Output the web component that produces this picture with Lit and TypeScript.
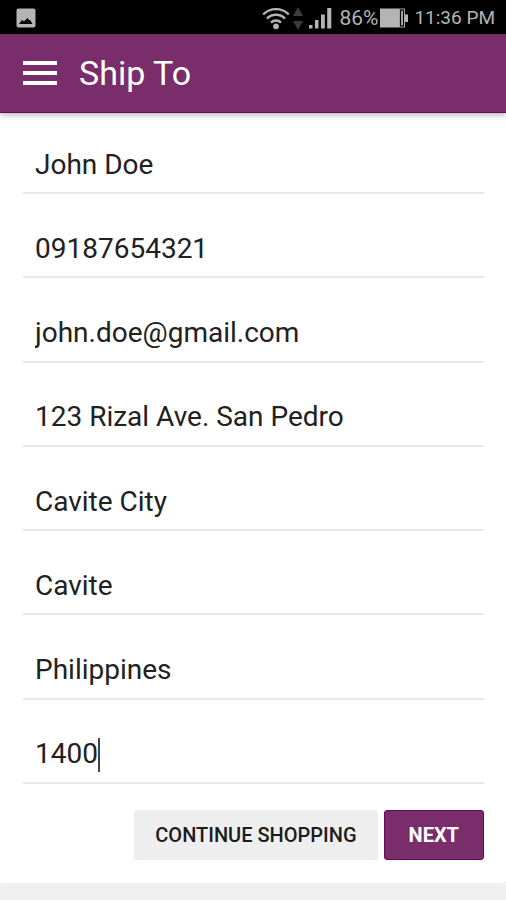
import { LitElement, html, css } from "lit";
import { customElement, state } from "lit/decorators.js";
import { styleMap } from "lit/directives/style-map.js";

interface Field {
  name: string;
  label: string;
  type: string;
  value: string;
}

@customElement("status-bar")
class StatusBar extends LitElement {
  static styles = css`
    :host {
      display: flex;
      align-items: center;
      height: 34px;
      padding: 2px 11px 0 16px;
      box-sizing: border-box;
      background: #000;
      color: #b4b4b4;
      font-size: 19px;
      line-height: 24px;
    }
    svg { display: block; flex: none; }
    .spacer { flex: 1; }
    .wifi { margin-right: 3px; }
    .traffic { margin-right: 6px; }
    .signal { margin-right: 7px; }
    .level { font-size: 21px; }
    .battery { margin: 0 6px 0 2px; }
  `;

  render() {
    return html`
      <svg width="20" height="20" viewBox="0 0 20 20" aria-hidden="true">
        <rect x="0.5" y="0.5" width="19" height="19" rx="2" fill="#b4b4b4" />
        <path d="M3 16 L6 12 L8 13.500 L11.500 10 L13 12 L14 12 L16.500 16 Z" fill="#000" />
      </svg>
      <span class="spacer"></span>
      <svg class="wifi" width="28" height="24" viewBox="0 0 28 24" aria-hidden="true">
        <g fill="none" stroke="#b4b4b4" stroke-width="2.4">
          <path d="M1.200 8.500 A18 18 0 0 1 26.800 8.500" />
          <path d="M5 12.600 A12.600 12.600 0 0 1 23 12.600" />
          <path d="M9 16.600 A7 7 0 0 1 19 16.600" />
        </g>
        <circle cx="14" cy="20.300" r="2.900" fill="#b4b4b4" />
      </svg>
      <svg class="traffic" width="10" height="24" viewBox="0 0 10 24" aria-hidden="true">
        <path d="M0 10 L5 1 L10 10 Z M0 15 H10 L5 24 Z" fill="#3c3c3c" />
      </svg>
      <svg class="signal" width="23" height="22" viewBox="0 0 23 22" aria-hidden="true">
        <path d="M0 18 H3.500 V21.500 H0 Z M6 13 H9.500 V21.500 H6 Z M12 7.500 H15.800 V21.500 H12 Z M18.200 1 H22.300 V21.500 H18.200 Z" fill="#b4b4b4" />
      </svg>
      <span class="level">86%</span>
      <svg class="battery" width="28" height="20" viewBox="0 0 28 20" aria-hidden="true">
        <path d="M0 0.500 H25 V6.500 H28 V14 H25 V19.500 H0 Z" fill="#b4b4b4" />
        <rect x="20.500" y="2" width="3" height="16" fill="#b4b4b4" stroke="#000" stroke-width="1.200" />
      </svg>
      <span>11:36 PM</span>
    `;
  }
}

@customElement("app-root")
class AppRoot extends LitElement {
  static styles = css`
    :host {
      display: flex;
      flex-direction: column;
      min-height: 100vh;
      background: #f0f0f0;
      color: #212121;
      font-family: Roboto, "Liberation Sans", sans-serif;
    }
    * { box-sizing: border-box; }
    button, input {
      font: inherit;
      color: inherit;
      margin: 0;
    }
    .toolbar {
      display: flex;
      align-items: center;
      gap: 22px;
      height: 79px;
      padding: 0 23px;
      background: #792d6b;
      border-bottom: 1px solid #640a56;
      box-shadow: 0 2px 6px rgba(0, 0, 0, 0.3);
      color: #fff;
      z-index: 1;
    }
    .menu {
      display: block;
      padding: 0;
      border: 0;
      background: none;
    }
    .menu svg { display: block; }
    .title {
      margin: 0;
      font-size: 34px;
      font-weight: 400;
      line-height: 40px;
    }
    .card {
      flex: 1;
      display: flex;
      flex-direction: column;
      gap: 26px;
      margin-bottom: 17px;
      padding: 23px 22px 23px 23px;
      border-radius: 0 0 4px 4px;
      background: #fff;
    }
    .fields {
      flex: 1;
      display: flex;
      flex-direction: column;
      justify-content: space-between;
      gap: 16px;
    }
    .field {
      position: relative;
      font-size: 28px;
      line-height: 32px;
    }
    .input {
      display: block;
      width: 100%;
      height: 58px;
      padding: 0 12px;
      border: 0;
      border-bottom: 2px solid #e8e8e8;
      border-radius: 0;
      outline: 0;
      background: none;
      caret-color: transparent;
    }
    .caret {
      position: absolute;
      top: 12px;
      width: 2px;
      height: 34px;
      background: #444;
    }
    .actions {
      display: flex;
      justify-content: flex-end;
      gap: 6px;
    }
    .button {
      height: 50px;
      padding: 0 20px;
      border: 1px solid #ececec;
      border-radius: 3px;
      background: #eee;
      color: #1c1c1c;
      font-size: 20px;
      font-weight: 500;
      line-height: 24px;
      text-transform: uppercase;
    }
    .primary {
      padding: 0 24px;
      border-color: #640a56;
      background: #792d6b;
      color: #fff;
      font-weight: 700;
    }
  `;

  @state() private active = "postal";

  @state() private fields: Field[] = [
    { name: "name", label: "Full name", type: "text", value: "John Doe" },
    { name: "phone", label: "Phone", type: "tel", value: "09187654321" },
    { name: "email", label: "Email", type: "email", value: "john.doe@gmail.com" },
    { name: "street", label: "Street", type: "text", value: "123 Rizal Ave. San Pedro" },
    { name: "city", label: "City", type: "text", value: "Cavite City" },
    { name: "province", label: "Province", type: "text", value: "Cavite" },
    { name: "country", label: "Country", type: "text", value: "Philippines" },
    { name: "postal", label: "Postal code", type: "text", value: "1400" },
  ];

  private setValue(name: string, e: Event) {
    const value = (e.target as HTMLInputElement).value;
    this.fields = this.fields.map((f) => (f.name === name ? { ...f, value } : f));
  }

  // The postal code is all digits, so each character is exactly one ch wide.
  private caret(f: Field) {
    if (f.name !== this.active) return null;
    const left = `calc(12px + ${f.value.length}ch)`;
    return html`<span class="caret" style=${styleMap({ left })}></span>`;
  }

  render() {
    return html`
      <status-bar></status-bar>
      <header class="toolbar">
        <button class="menu" type="button" aria-label="Menu">
          <svg width="34" height="24" viewBox="0 0 34 24" aria-hidden="true">
            <path d="M0 0 H34 V4 H0 Z M0 10 H34 V14 H0 Z M0 20 H34 V24 H0 Z" fill="#fff" />
          </svg>
        </button>
        <h1 class="title">Ship To</h1>
      </header>
      <form class="card" @submit=${(e: Event) => e.preventDefault()}>
        <div class="fields">
          ${this.fields.map(
            (f) => html`
              <div class="field">
                <input
                  class="input"
                  name=${f.name}
                  type=${f.type}
                  aria-label=${f.label}
                  spellcheck="false"
                  .value=${f.value}
                  @input=${(e: Event) => this.setValue(f.name, e)}
                />
                ${this.caret(f)}
              </div>
            `
          )}
        </div>
        <div class="actions">
          <button class="button" type="button">Continue shopping</button>
          <button class="button primary" type="submit">Next</button>
        </div>
      </form>
    `;
  }
}
